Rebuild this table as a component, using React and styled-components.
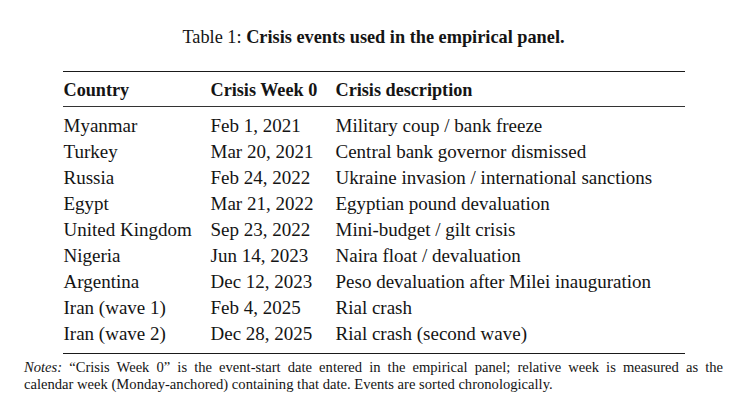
import styled, { createGlobalStyle } from "styled-components";

const GlobalStyle = createGlobalStyle`
  html, body {
    margin: 0;
    padding: 0;
    background: #ffffff;
  }
  body {
    font-family: "Liberation Serif", "Times New Roman", serif;
    color: #141414;
  }
`;

const Page = styled.div`
  width: 747px;
  height: 403px;
  padding-top: 27px;
  box-sizing: border-box;
  display: flex;
  flex-direction: column;
  align-items: center;
`;

const Caption = styled.div`
  font-size: 18.3px;
  line-height: 21px;
  text-align: center;
  margin-bottom: 23px;

  strong {
    font-weight: 700;
  }
`;

const Table = styled.table`
  width: 622px;
  border-collapse: collapse;
  table-layout: fixed;
  font-size: 19px;
  border-top: 1.6px solid #1a1a1a;
  border-bottom: 1.6px solid #1a1a1a;
`;

const HeadCell = styled.th`
  text-align: left;
  font-weight: 700;
  font-size: 18.2px;
  padding: 8px 0 6px 1px;
  height: 20px;
  line-height: 20px;
  border-bottom: 1px solid #333;
  white-space: nowrap;
`;

const Cell = styled.td`
  padding: 0 0 0 1px;
  height: 26px;
  line-height: 26px;
  white-space: nowrap;
  padding-top: ${(p) => (p.$first ? "6px" : "0")};
  padding-bottom: ${(p) => (p.$last ? "6px" : "0")};
`;

const Notes = styled.div`
  width: 699px;
  margin-top: 5px;
  font-size: 14.6px;
  line-height: 16.5px;
`;

const NotesLine = styled.div`
  white-space: nowrap;
  text-align: ${(p) => (p.$justify ? "justify" : "left")};
  text-align-last: ${(p) => (p.$justify ? "justify" : "auto")};

  em {
    font-style: italic;
  }
`;

const rows = [
  ["Myanmar", "Feb 1, 2021", "Military coup / bank freeze"],
  ["Turkey", "Mar 20, 2021", "Central bank governor dismissed"],
  ["Russia", "Feb 24, 2022", "Ukraine invasion / international sanctions"],
  ["Egypt", "Mar 21, 2022", "Egyptian pound devaluation"],
  ["United Kingdom", "Sep 23, 2022", "Mini-budget / gilt crisis"],
  ["Nigeria", "Jun 14, 2023", "Naira float / devaluation"],
  ["Argentina", "Dec 12, 2023", "Peso devaluation after Milei inauguration"],
  ["Iran (wave 1)", "Feb 4, 2025", "Rial crash"],
  ["Iran (wave 2)", "Dec 28, 2025", "Rial crash (second wave)"],
];

export default function App() {
  return (
    <>
      <GlobalStyle />
      <Page>
        <Caption>
          Table 1: <strong>Crisis events used in the empirical panel.</strong>
        </Caption>
        <Table>
          <colgroup>
            <col style={{ width: 147 }} />
            <col style={{ width: 125 }} />
            <col />
          </colgroup>
          <thead>
            <tr>
              <HeadCell>Country</HeadCell>
              <HeadCell>Crisis Week 0</HeadCell>
              <HeadCell>Crisis description</HeadCell>
            </tr>
          </thead>
          <tbody>
            {rows.map((r, i) => (
              <tr key={r[0]}>
                {r.map((c) => (
                  <Cell key={c} $first={i === 0} $last={i === rows.length - 1}>
                    {c}
                  </Cell>
                ))}
              </tr>
            ))}
          </tbody>
        </Table>
        <Notes>
          <NotesLine $justify>
            <em>Notes:</em> “Crisis Week 0” is the event-start date entered in the empirical panel; relative week is measured as the
          </NotesLine>
          <NotesLine>calendar week (Monday-anchored) containing that date. Events are sorted chronologically.</NotesLine>
        </Notes>
      </Page>
    </>
  );
}
